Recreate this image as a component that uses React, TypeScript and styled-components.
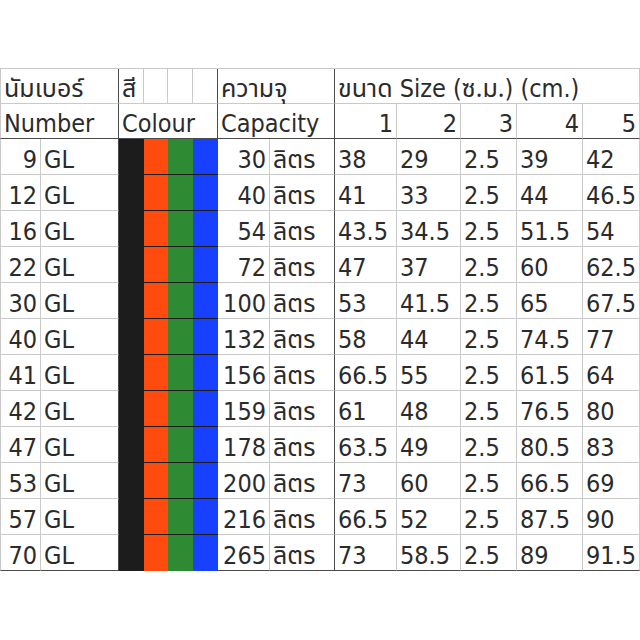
import React from "react";
import styled, { createGlobalStyle, css } from "styled-components";

const Global = createGlobalStyle`
  html, body { margin: 0; padding: 0; background: #ffffff; }
  body { font-family: "DejaVu Sans Condensed", "DejaVu Sans", "Noto Sans Thai", "Noto Sans", sans-serif; }
`;

const LIGHT = "#c9c9c9";
const DARK = "#4a4a4a";

const Page = styled.div`
  width: 640px;
  height: 640px;
  padding-top: 68px;
  box-sizing: border-box;
  background: #fff;
`;

const Sheet = styled.div`
  display: grid;
  grid-template-columns: 41px 78px 25px 24px 25px 25px 52px 65px 62px 64px 56px 66px 57px;
  grid-template-rows: 35px 35px repeat(12, 36px);
  width: 640px;
  border-top: 1px solid ${LIGHT};
  box-sizing: border-box;
  color: #2b2b2b;
  font-size: 25px;
`;

type CellProps = {
  $align?: "left" | "right";
  $right?: "light" | "dark" | "none";
  $bottom?: "light" | "dark" | "none";
  $left?: boolean;
  $span?: number;
};

const edge = (v: "light" | "dark" | "none" | undefined) =>
  v === "dark" ? `1px solid ${DARK}` : v === "none" ? "none" : `1px solid ${LIGHT}`;

const Cell = styled.div<CellProps>`
  box-sizing: border-box;
  display: flex;
  align-items: flex-end;
  justify-content: ${(p) => (p.$align === "right" ? "flex-end" : "flex-start")};
  padding: 0 3px 0 3px;
  white-space: nowrap;
  line-height: 28px;
  min-width: 0;
  border-right: ${(p) => edge(p.$right)};
  border-bottom: ${(p) => edge(p.$bottom)};
  ${(p) => p.$left && css`border-left: 1px solid ${LIGHT};`}
  ${(p) => p.$span && css`grid-column: span ${p.$span};`}
`;

const Swatch = styled.div<{ $color: string; $line: boolean }>`
  box-sizing: border-box;
  background: ${(p) => p.$color};
  border-bottom: ${(p) => (p.$line ? "1px solid #1c1c1c" : "none")};
`;

const ThaiText = styled.span`
  font-family: "Tahoma", "Noto Sans Thai", "Loma", "Garuda", "DejaVu Sans", sans-serif;
`;

const colours = ["#1c1c1c", "#ff4b0e", "#2f8a34", "#1740ff"];

const rows: [string, string, string, string, string, string, string][] = [
  ["9", "30", "38", "29", "2.5", "39", "42"],
  ["12", "40", "41", "33", "2.5", "44", "46.5"],
  ["16", "54", "43.5", "34.5", "2.5", "51.5", "54"],
  ["22", "72", "47", "37", "2.5", "60", "62.5"],
  ["30", "100", "53", "41.5", "2.5", "65", "67.5"],
  ["40", "132", "58", "44", "2.5", "74.5", "77"],
  ["41", "156", "66.5", "55", "2.5", "61.5", "64"],
  ["42", "159", "61", "48", "2.5", "76.5", "80"],
  ["47", "178", "63.5", "49", "2.5", "80.5", "83"],
  ["53", "200", "73", "60", "2.5", "66.5", "69"],
  ["57", "216", "66.5", "52", "2.5", "87.5", "90"],
  ["70", "265", "73", "58.5", "2.5", "89", "91.5"],
];

export default function App() {
  return (
    <Page>
      <Global />
      <Sheet>
        {/* header row 1 */}
        <Cell $span={2} $left $right="dark">
          <ThaiText>นัมเบอร์</ThaiText>
        </Cell>
        <Cell>
          <ThaiText>สี</ThaiText>
        </Cell>
        <Cell />
        <Cell />
        <Cell $right="dark" />
        <Cell $span={2} $right="dark">
          <ThaiText>ความจุ</ThaiText>
        </Cell>
        <Cell $span={5}>
          <ThaiText>ขนาด</ThaiText>&nbsp;Size (<ThaiText>ซ.ม.</ThaiText>) (cm.)
        </Cell>

        {/* header row 2 */}
        <Cell $span={2} $left $right="dark" $bottom="dark">
          Number
        </Cell>
        <Cell $span={4} $right="dark" $bottom="dark">
          Colour
        </Cell>
        <Cell $span={2} $right="dark" $bottom="dark">
          Capacity
        </Cell>
        {["1", "2", "3", "4", "5"].map((n) => (
          <Cell key={n} $align="right" $bottom="dark">
            {n}
          </Cell>
        ))}

        {rows.map((r, i) => {
          const last = i === rows.length - 1;
          const b = last ? "dark" : "light";
          return (
            <React.Fragment key={r[0]}>
              <Cell $left $align="right" $bottom={b}>
                {r[0]}
              </Cell>
              <Cell $right="dark" $bottom={b}>
                GL
              </Cell>
              {colours.map((c, j) => (
                <Swatch key={c} $color={c} $line={j > 0 && !last} />
              ))}
              <Cell $align="right" $bottom={b}>
                {r[1]}
              </Cell>
              <Cell $right="dark" $bottom={b}>
                <ThaiText>ลิตร</ThaiText>
              </Cell>
              {r.slice(2).map((v, k) => (
                <Cell key={k} $bottom={b}>
                  {v}
                </Cell>
              ))}
            </React.Fragment>
          );
        })}
      </Sheet>
    </Page>
  );
}
